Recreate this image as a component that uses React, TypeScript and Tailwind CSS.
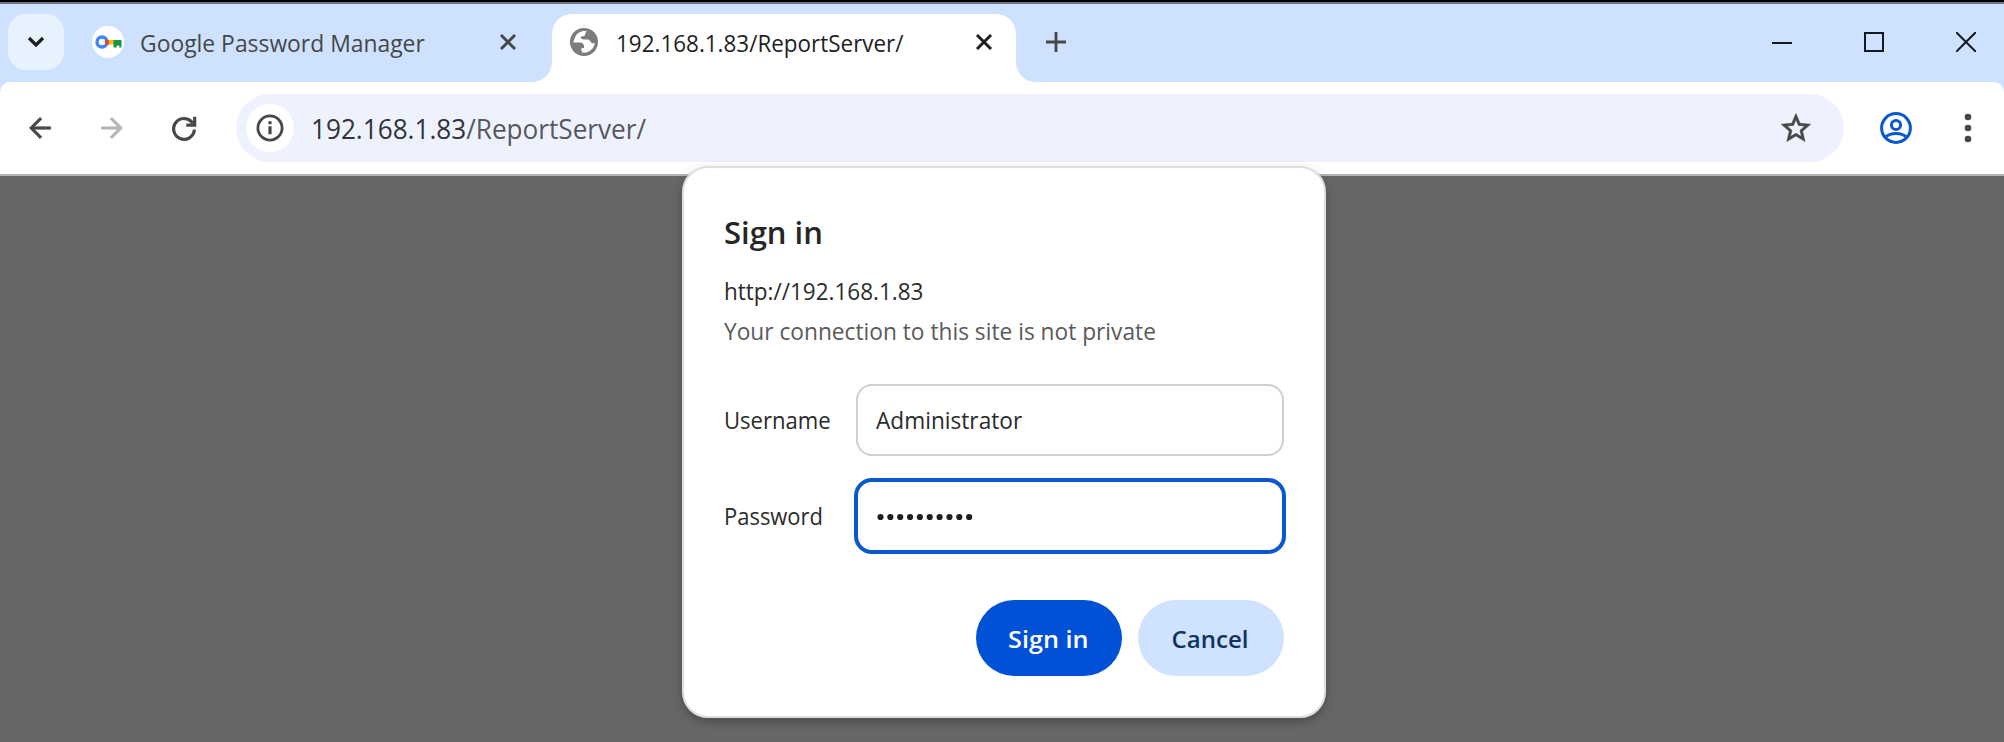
import type { ReactNode } from "react";

function Label({ className, children }: { className: string; children: ReactNode }) {
  return <span className={`block shrink-0 origin-left whitespace-pre ${className}`}>{children}</span>;
}

function TabClose() {
  return (
    <svg className="size-5 shrink-0" viewBox="0 0 20 20" fill="none" stroke="currentColor" strokeWidth="3">
      <path d="M3 3l14 14M17 3L3 17" />
    </svg>
  );
}

function TabStrip() {
  return (
    <div className="flex h-[78px] shrink-0 items-start bg-[#cee2ff] text-[#474747]">
      <div className="mt-[10px] ml-2 flex size-14 items-center justify-center rounded-[18px] bg-[#e8f2ff] text-[#1f1f1f]">
        <svg className="size-5" viewBox="0 0 20 20" fill="none" stroke="currentColor" strokeWidth="3.2">
          <path d="M3 6l7 7 7-7" />
        </svg>
      </div>
      <div className="mt-[10px] ml-7 flex h-14 w-[434px] items-center">
        <svg className="size-8 shrink-0" viewBox="0 0 32 32">
          <circle cx="16" cy="16" r="16" fill="#fff" />
          <rect x="16" y="14" width="6" height="4.5" fill="#fbbc04" />
          <path d="M21.500 14h8v7.500h-2.300v-2h-2.500v2h-3.200z" fill="#179644" />
          <circle cx="10" cy="16" r="5" fill="none" stroke="#4285f4" strokeWidth="3.400" />
          <rect x="13" y="14" width="4" height="4.5" fill="#ea4335" />
        </svg>
        <Label className="mt-0.5 ml-4 w-[358px] scale-x-[.953] text-[24px] leading-8">Google Password Manager</Label>
        <TabClose />
      </div>
      <div className="flex h-full items-end">
        <svg className="ml-[6px] h-5 w-5 text-white" viewBox="0 0 20 20" fill="currentColor">
          <path d="M20 0v20H0C11 20 20 11 20 0z" />
        </svg>
        <div className="mt-[10px] flex h-[68px] w-[464px] self-start rounded-t-[20px] bg-white pl-[18px] text-[#1f1f1f]">
          <div className="flex h-14 items-center">
            <svg className="size-7 shrink-0" viewBox="0 0 28 28">
              <circle cx="14" cy="14" r="14" fill="#7c7c7c" />
              <path
                fill="#fff"
                d="M16.500 3C11 2.500 6.500 5 5 9.500c-1 2-1.500 3.500-1.700 5h8.200l2.500 2.500v3l-3 .5 1 4c6.500 1 12-3.500 12.800-9.500-2 .8-3.800.2-4.300-1.800l-2-1.700h-5l-2.500-1V8.500l3.500-.5 1-2.500z"
              />
            </svg>
            <Label className="mt-0.5 ml-[18px] w-[358px] scale-x-[.935] text-[24px] leading-8">192.168.1.83/ReportServer/</Label>
            <TabClose />
          </div>
        </div>
        <svg className="h-5 w-5 text-white" viewBox="0 0 20 20" fill="currentColor">
          <path d="M0 0v20h20C9 20 0 11 0 0z" />
        </svg>
      </div>
      <svg className="mt-[27px] ml-[9px] size-[22px]" viewBox="0 0 22 22" fill="none" stroke="currentColor" strokeWidth="2.800">
        <path d="M11 1v20M1 11h20" />
      </svg>
      <div className="mt-[28px] mr-7 ml-auto flex gap-[72px] text-[#141820]">
        <svg className="size-5" viewBox="0 0 20 20" stroke="currentColor" strokeWidth="2">
          <path d="M0 11h20" />
        </svg>
        <svg className="size-5" viewBox="0 0 20 20" fill="none" stroke="currentColor" strokeWidth="2">
          <path d="M1 1h18v18H1z" />
        </svg>
        <svg className="size-5" viewBox="0 0 20 20" stroke="currentColor" strokeWidth="2">
          <path d="M0 0l20 20M20 0L0 20" />
        </svg>
      </div>
    </div>
  );
}

function Toolbar() {
  return (
    <div className="shrink-0 bg-[#cee2ff]">
      <div className="flex h-[94px] items-center rounded-t-[10px] border-b-2 border-[#b4b4b4] bg-white pl-6 text-[#474747]">
        <svg className="size-8" viewBox="0 0 24 24" fill="currentColor">
          <path d="M20 11H7.830l5.590-5.590L12 4l-8 8 8 8 1.410-1.410L7.830 13H20v-2z" stroke="currentColor" strokeWidth=".4" />
        </svg>
        <svg className="ml-10 size-8 text-[#b5b5b5]" viewBox="0 0 24 24" fill="currentColor">
          <path d="M12 4l-1.410 1.410L16.170 11H4v2h12.170l-5.580 5.590L12 20l8-8z" stroke="currentColor" strokeWidth=".4" />
        </svg>
        <svg className="ml-10 size-8" viewBox="0 0 24 24" fill="none" stroke="currentColor" strokeWidth="2.400">
          <path d="M18.600 8.500A7.800 7.800 0 1 0 19.800 13.300" />
          <path d="M20 3.500v6.300h-6.300" />
        </svg>
        <div className="ml-9 flex h-[68px] w-[1608px] items-center rounded-full bg-[#eef2fe] pl-[10px]">
          <div className="flex size-12 items-center justify-center rounded-full bg-white">
            <svg className="size-7" viewBox="0 0 28 28" fill="currentColor">
              <circle cx="14" cy="14" r="12.100" fill="none" stroke="currentColor" strokeWidth="2.800" />
              <circle cx="14" cy="8.700" r="1.800" />
              <path d="M12.400 12.300h3.200v8h-3.200z" />
            </svg>
          </div>
          <Label className="ml-[17px] scale-x-[.934] text-[28px] leading-9">
            <span className="text-[#303338]">192.168.1.83</span>
            <span className="text-[#55585e]">/ReportServer/</span>
          </Label>
          <svg className="mr-[28px] ml-auto size-10" viewBox="0 0 24 24" fill="currentColor">
            <path
              d="M22 9.240l-7.190-.62L12 2 9.190 8.630 2 9.240l5.460 4.730L5.820 21 12 17.270 18.180 21l-1.630-7.030L22 9.240zM12 15.400l-3.760 2.270 1-4.280-3.320-2.880 4.380-.38L12 6.100l1.710 4.040 4.380.38-3.320 2.880 1 4.280L12 15.400z"
              transform="translate(1.400 1.600) scale(.88)"
              stroke="currentColor"
              strokeWidth=".4"
            />
          </svg>
        </div>
        <svg className="ml-9 size-8 text-[#0b57d0]" viewBox="0 0 32 32" fill="none" stroke="currentColor" strokeWidth="3">
          <circle cx="16" cy="16" r="14.400" />
          <circle cx="16" cy="13" r="4.600" />
          <path d="M5.500 25c5.500-4.600 15.500-4.600 21 0" />
        </svg>
        <svg className="ml-[52px] h-[30px] w-2" viewBox="0 0 8 30" fill="currentColor">
          <circle cx="4" cy="4" r="3.300" />
          <circle cx="4" cy="15" r="3.300" />
          <circle cx="4" cy="26" r="3.300" />
        </svg>
      </div>
    </div>
  );
}

function SignInDialog() {
  return (
    <div className="absolute top-[166px] left-[682px] flex h-[552px] w-[644px] flex-col rounded-[26px] border-2 border-[#dedede] bg-white pr-10 pl-10 text-[#2b2b2b] shadow-[0_4px_10px_rgba(0,0,0,0.25)]">
      <Label className="mt-[44px] self-start text-[31px] leading-10 font-semibold text-[#262626]">Sign in</Label>
      <Label className="mt-[19px] self-start scale-x-[.937] text-[24px] leading-10">http://192.168.1.83</Label>
      <Label className="self-start scale-x-[.946] text-[24px] leading-10 text-[#5a5a5a]">Your connection to this site is not private</Label>
      <div className="mt-[33px] flex items-center">
        <Label className="w-[132px] scale-x-[.92] text-[24px]">Username</Label>
        <div className="flex h-[72px] w-[428px] items-center rounded-[16px] border-2 border-[#cfcfcf] pl-[18px]">
          <Label className="scale-x-[.944] text-[24px]">Administrator</Label>
        </div>
      </div>
      <div className="mt-[22px] flex items-center">
        <Label className="w-[130px] scale-x-[.915] text-[24px]">Password</Label>
        <div className="flex h-[76px] w-[432px] shrink-0 items-center rounded-[18px] border-4 border-[#0b57d0] pl-[19px]">
          <svg className="mt-0.5 h-2 w-[97px]" viewBox="0 0 97 8" fill="#1f1f1f">
            {Array.from({ length: 10 }, (_, i) => (
              <circle key={i} cx={3.5 + i * 9.85} cy={4} r={3.1} />
            ))}
          </svg>
        </div>
      </div>
      <div className="mt-[46px] flex justify-end gap-4 text-[24px] font-semibold">
        <div className="flex h-[76px] w-[146px] items-center justify-center rounded-full bg-[#0151d7] pt-0.5 pr-0.5 text-white">
          <span className="scale-x-[1.05]">Sign in</span>
        </div>
        <div className="flex h-[76px] w-[146px] items-center justify-center rounded-full bg-[#cfe2ff] pt-0.5 pr-0.5 text-[#123260]">
          <span>Cancel</span>
        </div>
      </div>
    </div>
  );
}

export default function App() {
  return (
    <div className="relative flex h-[742px] w-[2004px] flex-col overflow-hidden bg-[#666666] font-['Open_Sans','Noto_Sans',sans-serif]">
      <div className="h-1 shrink-0 border-b-2 border-[#6b7480] bg-black" />
      <TabStrip />
      <Toolbar />
      <SignInDialog />
    </div>
  );
}
